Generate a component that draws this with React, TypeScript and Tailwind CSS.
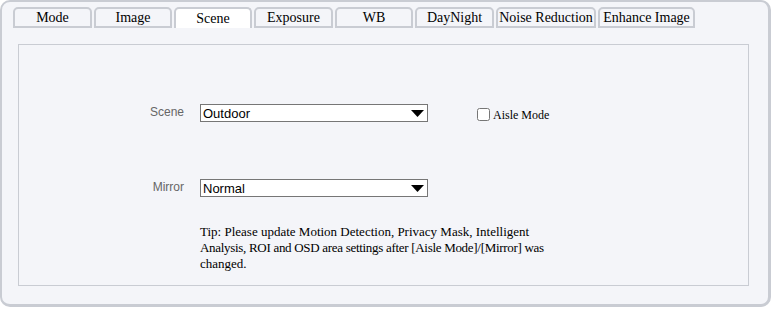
import { useState } from 'react';

const tabs = [
  { name: 'Mode', width: 'w-[79px]' },
  { name: 'Image', width: 'w-[78px]' },
  { name: 'Scene', width: 'w-[78px]' },
  { name: 'Exposure', width: 'w-[79px]' },
  { name: 'WB', width: 'w-[78px]' },
  { name: 'DayNight', width: 'w-[79px]' },
  { name: 'Noise Reduction', width: 'w-[100px]' },
  { name: 'Enhance Image', width: 'w-[97px]' },
];

function SelectBox({ value }: { value: string }) {
  return (
    <div className="flex h-[18px] w-[228px] items-center justify-between border border-[#767676] bg-white pl-[2px] pr-[3px] font-['Liberation_Sans',Arial,sans-serif] text-[13px] leading-none text-black">
      <span>{value}</span>
      <svg width="13" height="7" viewBox="0 0 13 7" aria-hidden="true">
        <polygon points="0,0 13,0 6.5,7" fill="#000" />
      </svg>
    </div>
  );
}

export default function App() {
  const [active, setActive] = useState('Scene');
  const [aisle, setAisle] = useState(false);

  return (
    <div className="h-[309px] w-[773px] bg-white">
      {/* Outer panel */}
      <div className="h-[307px] w-[771px] rounded-[10px] border-t-2 border-r-[3px] border-b-[3px] border-l-2 border-[#c9ccd3] bg-[#f4f5f9]">
        {/* Tabs */}
        <div className="flex gap-[2px] pl-[11px] pt-[5px]">
          {tabs.map((tab) => {
            const isActive = tab.name === active;
            return (
              <button
                key={tab.name}
                onClick={() => setActive(tab.name)}
                className={`flex h-[21px] items-center justify-center rounded-t-[5px] border-2 border-[#c9ccd3] font-['Liberation_Serif','Times_New_Roman',serif] text-[14px] leading-none text-black ${tab.width} ${
                  isActive ? 'border-b-0 bg-white' : 'bg-[#f4f5f9]'
                }`}
              >
                {tab.name}
              </button>
            );
          })}
        </div>

        {/* Content box */}
        <div className="mt-[16px] ml-[16px] mr-[19px] h-[242px] border border-[#c9ccd3] pt-[59px]">
          <div className="flex items-start">
            <div className="w-[165px] pt-[1px] text-right font-['Liberation_Sans',Arial,sans-serif] text-[12px] leading-[14px] text-[#666]">
              Scene
            </div>
            <div className="ml-[16px]">
              <SelectBox value="Outdoor" />
            </div>
            <label className="ml-[49px] mt-[3px] flex items-center gap-[3px] font-['Liberation_Serif','Times_New_Roman',serif] text-[12px] leading-none text-black">
              <input
                type="checkbox"
                checked={aisle}
                onChange={(e) => setAisle(e.target.checked)}
                className="m-0 h-[13px] w-[13px]"
              />
              <span className="pt-[2px]">Aisle Mode</span>
            </label>
          </div>

          <div className="mt-[57px] flex items-start">
            <div className="w-[165px] pt-[1px] text-right font-['Liberation_Sans',Arial,sans-serif] text-[12px] leading-[14px] text-[#666]">
              Mirror
            </div>
            <div className="ml-[16px]">
              <SelectBox value="Normal" />
            </div>
          </div>

          {/* Tip: lines broken as in the original */}
          <p className="mt-[27px] ml-[181px] whitespace-nowrap font-['Liberation_Serif','Times_New_Roman',serif] text-[13px] leading-[16px] text-black">
            Tip: Please update Motion Detection, Privacy Mask, Intelligent
            <br />
            <span className="tracking-[-0.3px]">Analysis, ROI and OSD area settings after [Aisle Mode]/[Mirror] was</span>
            <br />
            changed.
          </p>
        </div>
      </div>
    </div>
  );
}
